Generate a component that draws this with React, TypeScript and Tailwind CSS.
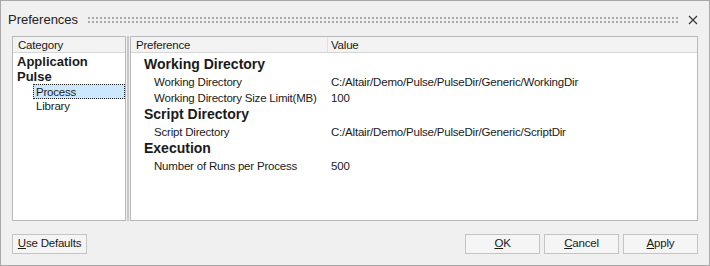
import React from 'react';

type Item = { label: string; value: string };
type Group = { title: string; items: Item[] };

const groups: Group[] = [
  {
    title: 'Working Directory',
    items: [
      { label: 'Working Directory', value: 'C:/Altair/Demo/Pulse/PulseDir/Generic/WorkingDir' },
      { label: 'Working Directory Size Limit(MB)', value: '100' },
    ],
  },
  {
    title: 'Script Directory',
    items: [{ label: 'Script Directory', value: 'C:/Altair/Demo/Pulse/PulseDir/Generic/ScriptDir' }],
  },
  {
    title: 'Execution',
    items: [{ label: 'Number of Runs per Process', value: '500' }],
  },
];

const font = { fontFamily: '"Liberation Sans", Arial, sans-serif' };

const Btn = ({ children, className = '' }: { children: React.ReactNode; className?: string }) => (
  <button
    className={`h-[20px] w-[75px] border border-[#c4c4c4] bg-[#f5f5f5] text-[11.5px] tracking-[-0.2px] leading-none text-[#1a1a1a] ${className}`}
  >
    {children}
  </button>
);

export default function App() {
  return (
    <div
      className="w-[710px] h-[266px] border border-[#a8a8a8] bg-[#f0f0f0] flex flex-col text-[#1a1a1a] overflow-hidden"
      style={font}
    >
      {/* title bar */}
      <div className="h-[35px] flex items-center pl-[7px] pr-[11px] shrink-0">
        <span className="w-[80px] text-[13px] text-[#222] pt-[3px]">Preferences</span>
        <svg className="mt-[5px]" width="592" height="8">
          <defs>
            <pattern id="dots" width="4" height="4" patternUnits="userSpaceOnUse">
              <rect x="0" y="0" width="2" height="2" fill="#aaaaaa" />
            </pattern>
          </defs>
          <rect x="0" y="0" width="592" height="6" fill="url(#dots)" />
        </svg>
        <svg className="ml-auto mt-[3px]" width="10" height="10" viewBox="0 0 10 10">
          <path d="M1 1 L9 9 M9 1 L1 9" stroke="#333" strokeWidth="1.1" />
        </svg>
      </div>

      {/* panels */}
      <div className="flex px-[11px] h-[185px] shrink-0 text-[11.5px] tracking-[-0.2px]">
        <div className="w-[114px] border border-[#b9b9b9] bg-white flex flex-col">
          <div className="h-[16px] border-b border-[#d6d6d6] bg-[#f3f3f3] pl-[5px] leading-[16px]">
            Category
          </div>
          <div className="pt-[1px]">
            <div className="h-[15px] leading-[15px] pl-[4px] font-bold text-[13px] tracking-normal">Application</div>
            <div className="h-[15px] leading-[15px] pl-[4px] font-bold text-[13px] tracking-normal">Pulse</div>
            <div className="h-[15px] leading-[14px] ml-[20px] pl-[2px] bg-[#cce8ff] border border-dotted border-[#222]">
              Process
            </div>
            <div className="h-[15px] leading-[15px] pl-[23px]">Library</div>
          </div>
        </div>
        <div className="w-[4px] flex justify-center">
          <div className="w-[2px] border-x border-[#c8c8c8] bg-[#e6e6e6]" />
        </div>
        <div className="flex-1 border border-[#b9b9b9] bg-white flex flex-col">
          <div className="h-[16px] border-b border-[#d6d6d6] bg-[#f3f3f3] flex leading-[16px]">
            <div className="w-[197px] pl-[5px] border-r border-[#e0e0e0]">Preference</div>
            <div className="pl-[3px]">Value</div>
          </div>
          <div className="pt-[3px]">
            {groups.map((g) => (
              <div key={g.title}>
                <div className="h-[18px] leading-[17px] pl-[13px] text-[14px] tracking-normal font-bold">{g.title}</div>
                {g.items.map((it) => (
                  <div key={it.label} className="h-[16px] leading-[16px] flex">
                    <div className="w-[197px] pl-[23px] whitespace-nowrap">{it.label}</div>
                    <div className="pl-[3px] whitespace-nowrap">{it.value}</div>
                  </div>
                ))}
              </div>
            ))}
          </div>
        </div>
      </div>

      {/* buttons */}
      <div className="flex items-center px-[11px] pt-[13px]">
        <Btn>
          <u>U</u>se Defaults
        </Btn>
        <div className="ml-auto flex gap-[4px]">
          <Btn>
            <u>O</u>K
          </Btn>
          <Btn>
            <u>C</u>ancel
          </Btn>
          <Btn>
            <u>A</u>pply
          </Btn>
        </div>
      </div>
    </div>
  );
}
